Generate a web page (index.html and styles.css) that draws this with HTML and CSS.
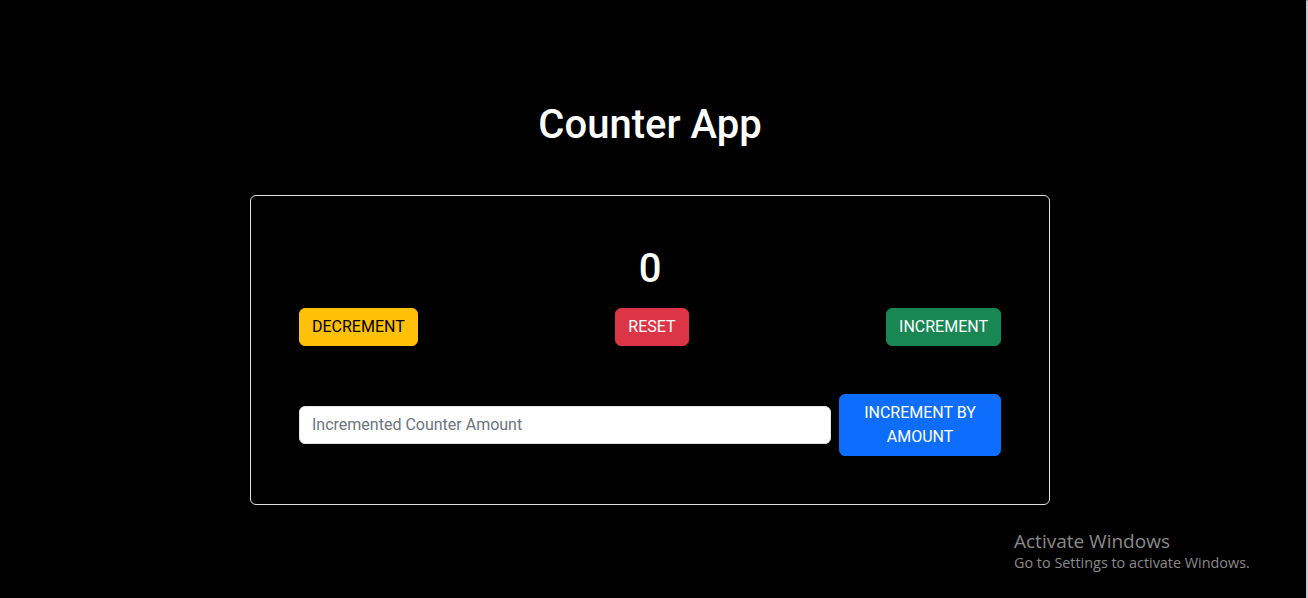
FILE: index.html
```html
<!DOCTYPE html>
<html lang="en">
<head>
<meta charset="utf-8">
<title>Counter App</title>
<link rel="stylesheet" href="styles.css">
</head>
<body>
<div class="page">
  <main class="app">
    <h1 class="title">Counter App</h1>
    <section class="card">
      <h2 class="count">0</h2>
      <div class="btn-row">
        <button class="btn btn-warning">DECREMENT</button>
        <button class="btn btn-danger">RESET</button>
        <button class="btn btn-success">INCREMENT</button>
      </div>
      <div class="amount-row">
        <input class="amount-input" type="text" placeholder="Incremented Counter Amount">
        <button class="btn btn-primary btn-amount">INCREMENT BY AMOUNT</button>
      </div>
    </section>
  </main>
  <div class="edge"></div>
</div>
<div class="watermark">
  <div class="wm-title">Activate Windows</div>
  <div class="wm-sub">Go to Settings to activate Windows.</div>
</div>
</body>
</html>
```
FILE: styles.css
```css
* { box-sizing: border-box; }
html, body { margin: 0; padding: 0; height: 100%; }
body {
  background: #000;
  color: #fff;
  font-family: Roboto, "Liberation Sans", Arial, sans-serif;
  overflow: hidden;
}
.page {
  display: flex;
  height: 598px;
}
.app {
  width: 1300px;
  display: flex;
  flex-direction: column;
  align-items: center;
}
.edge {
  margin-left: auto;
  width: 2px;
  background: #c8ccd0;
  border-top-left-radius: 6px;
  border-top-right-radius: 6px;
}
.title {
  margin: 101px 0 46px;
  font-size: 40px;
  line-height: 48px;
  font-weight: 500;
}
.card {
  width: 800px;
  border: 1px solid #dee2e6;
  border-radius: 6px;
  padding: 48px;
  display: flex;
  flex-direction: column;
}
.count {
  margin: 1px 0 15px;
  text-align: center;
  font-size: 40px;
  line-height: 48px;
  font-weight: 500;
}
.btn-row {
  display: flex;
  justify-content: space-between;
  margin-bottom: 48px;
}
.btn {
  font-family: inherit;
  font-size: 16px;
  line-height: 24px;
  padding: 6px 12px;
  border: 1px solid transparent;
  border-radius: 6px;
  color: #fff;
  cursor: pointer;
}
.btn-warning { background: #ffc107; border-color: #ffc107; color: #000; }
.btn-danger { background: #dc3545; border-color: #dc3545; }
.btn-success { background: #198754; border-color: #198754; }
.btn-primary { background: #0d6efd; border-color: #0d6efd; }
.amount-row {
  display: flex;
  align-items: center;
  gap: 8px;
}
.amount-input {
  flex: 1;
  height: 38px;
  font-family: inherit;
  font-size: 16px;
  padding: 5px 12px 7px;
  border: 1px solid #dee2e6;
  border-radius: 6px;
  background: #fff;
  color: #212529;
}
.amount-input::placeholder { color: #6c757d; }
.btn-amount {
  width: 162px;
  padding: 6px 12px;
}
.watermark {
  position: absolute;
  left: 1014px;
  top: 529px;
  font-family: "Open Sans", "Noto Sans", sans-serif;
  color: #8a8a8a;
}
.wm-title { font-size: 19px; line-height: 24px; }
.wm-sub { font-size: 14.4px; line-height: 20px; }
```
